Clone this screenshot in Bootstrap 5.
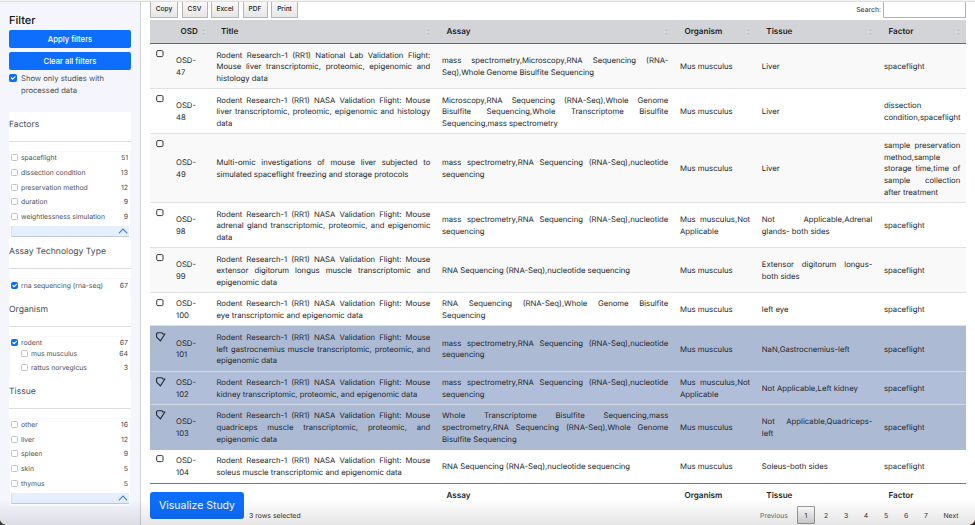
<!DOCTYPE html>
<html lang="en">
<head>
<meta charset="utf-8">
<title>Studies</title>
<link rel="stylesheet" href="https://cdn.jsdelivr.net/npm/bootstrap@5.3.0/dist/css/bootstrap.min.css">
<style>
body{font-family:Inter,"Liberation Sans",sans-serif;font-size:7.73px;line-height:11.8px;color:#24282c;width:975px;height:525px;overflow:hidden;background:#fff;text-rendering:geometricPrecision}
.page-frame{height:525px;border-top:1px solid #f3f3f4;position:relative}
.page-frame::before{content:"";position:absolute;left:0;right:0;top:0;height:1px;background:#dedfe2;z-index:2}
.side{width:141px;background:#f5f6fd;border-right:1px solid #cfd0d8;padding:12px 9px 0 9px;color:#4a4e54}
.side h1{font-size:11px;line-height:14px;font-weight:500;color:#111;margin:0 0 3px}
.side .btn{height:18px;padding:0;font-size:7.7px;line-height:19px;border:0;border-radius:2px;font-weight:500;margin-bottom:4px;background:#0d6efd}
.side .form-check-input{width:7px;height:7px;min-height:0;margin:0;float:none;border-radius:1.5px;border:1px solid #c0c2c8;flex:none}
.side .form-check-input:checked{border-color:#0d6efd;background-size:8px 8px}
.only-processed{font-size:7.65px;line-height:12px;gap:4px;height:38px}
.only-processed span{margin-top:-1px}
.only-processed .form-check-input{width:8px;height:8px}
.facet-head{height:39px;background:#fff;font-size:8.6px;line-height:27px}
.facet-head span{display:block;height:30px;border-bottom:1px solid #dcdddf}
.facet-body{background:#fff;margin:0 1px;padding:0 1px 2px 1px;border-top:1px solid #f8f8fc;font-size:6.8px}
.facet-row{height:14.68px;gap:3.5px;padding-right:1px;padding-bottom:3px;line-height:11px}
.facet-row .form-check-input{margin-left:-.5px}
.facet-row span:last-child{margin-left:auto;font-size:7px}
.collapse-bar{height:11px;background:#e5effd;border-bottom:1px solid #c3cbd6;border-left:1px solid #d5dfee;margin-top:1px;padding-right:1px}
.sub-first,.sub-row{padding-left:10px}
.sub-first{margin-top:-4.3px}
.single-row{padding-bottom:3px}
.main-area{padding:0 9px 0 9px;width:834px}
.tools{height:19px}
.tools .btn{height:16.5px;border:1px solid #b5b5b5;border-radius:1px;border-top:0;padding:0;font-size:6.6px;line-height:17px;background:linear-gradient(#fafafa,#e6e6e6);color:#222;font-weight:500}
.b-copy{width:28px}.b-csv{width:26px}.b-xls{width:28px}.b-pdf{width:25px}.b-prt{width:27px}
.search-box{width:83px;height:17px;border:1px solid #b0b0b0;border-top:0;border-radius:1.5px;padding:0}
.studies{table-layout:fixed;width:816px;border-collapse:separate;border-spacing:0;margin:0}
.studies th{height:24px;background:#d3d4d8;border-bottom:1px solid #66686b;padding:1px 5px 0 10.5px;font-weight:600;font-size:8.1px;color:#1c1e21;vertical-align:middle}
.studies th svg{float:right;margin:2px 0 0}
.studies td{padding:2.4px 5.7px 0 6px;vertical-align:middle;text-align:justify;border-bottom:1px solid #dfe0e2}
.studies td:first-child{vertical-align:top;padding:4.6px 0 0 5px;text-align:left;line-height:0}
.studies tbody tr:nth-child(odd){background:#f9f9f9}
.studies tbody tr.picked{background:#acbad4}
.studies tbody tr.picked:nth-child(even){background:#b0bed9}
.studies tbody tr.picked td{border-color:#cfd6e4}
.studies tbody tr:last-child td{border-bottom:1px solid #77797b}
.studies tbody tr.picked:nth-child(9) td{border-color:#acbad4}
.h45 td{height:45px}.h46 td{height:45.5px}.h69 td{height:69px}.h33 td{height:33px}.h34 td{height:34px}
.studies tfoot td{height:24px;border:0;font-weight:600;font-size:8.1px;color:#1c1e21;padding-top:0;padding-left:10.5px}
.bottom-bar{height:35px;margin-top:-15.5px}
.bottom-bar .btn{width:94px;height:27px;border:0;border-radius:3px;padding:0;font-size:10.5px;line-height:28px;background:#0d6efd}
.rows-note{font-size:6.9px;padding:17.5px 0 0 5px;color:#333}
.pager{margin-top:14px;font-size:6.8px;line-height:19px;color:#333;text-align:center}
.pager span{width:20px}
.pager .now{width:18px;height:18px;margin:0 1px;border:1px solid #999;border-radius:1px;background:linear-gradient(#fff,#dcdcdc);line-height:17px}
.foot-shade{position:absolute;left:0;right:0;bottom:0;height:26px;background:linear-gradient(rgba(0,0,0,0),rgba(0,0,0,.1));pointer-events:none}
.corner{position:absolute;bottom:0;width:6px;height:5px}
</style>
<script src="https://cdn.jsdelivr.net/npm/bootstrap@5.3.0/dist/js/bootstrap.bundle.min.js"></script>
</head>
<body>
<svg width="0" height="0" class="d-none">
<symbol id="box" viewBox="0 0 12 12"><rect x="1.7" y="1.6" width="6.3" height="6" rx="1.2" fill="#fff" fill-opacity=".3" stroke="#34383d"/></symbol>
<symbol id="tick" viewBox="0 0 12 12"><path d="M1.6 6.3V3Q1.6 1.8 2.8 1.8H6.6Q7.8 1.8 7.8 2.8L9.8 3.2 5.4 9.9 1.6 6.2" fill="none" stroke="#23272e" stroke-width="1.1"/></symbol>
<symbol id="sort" viewBox="0 0 5 8"><path d="M2.5 0 4.9 3.5H.1ZM2.5 8 4.9 4.5H.1Z" fill="#bfc2cb" stroke="#e2e4e8" stroke-width=".5"/></symbol>
<symbol id="up" viewBox="0 0 10 8"><path d="M.8 6.4 5 2.1 9.2 6.4" fill="none" stroke="#3c7fe8" stroke-width="1.1"/></symbol>
</svg>
<div class="page-frame d-flex">
<aside class="side flex-shrink-0">
<h1>Filter</h1>
<button class="btn btn-primary d-block w-100">Apply filters</button>
<button class="btn btn-primary d-block w-100">Clear all filters</button>
<label class="only-processed d-flex align-items-start"><input class="form-check-input" type="checkbox" checked><span>Show only studies with<br>processed data</span></label>
<div class="facet-head"><span>Factors</span></div>
<div class="facet-body">
<div class="facet-row d-flex align-items-center"><input class="form-check-input" type="checkbox"><span>spaceflight</span><span>51</span></div>
<div class="facet-row d-flex align-items-center"><input class="form-check-input" type="checkbox"><span>dissection condition</span><span>13</span></div>
<div class="facet-row d-flex align-items-center"><input class="form-check-input" type="checkbox"><span>preservation method</span><span>12</span></div>
<div class="facet-row d-flex align-items-center"><input class="form-check-input" type="checkbox"><span>duration</span><span>9</span></div>
<div class="facet-row d-flex align-items-center"><input class="form-check-input" type="checkbox"><span>weightlessness simulation</span><span>9</span></div>
<div class="collapse-bar d-flex justify-content-end align-items-center"><svg width="10" height="8"><use href="#up"/></svg></div>
</div>
<div class="facet-head"><span>Assay Technology Type</span></div>
<div class="facet-body single-row">
<div class="facet-row d-flex align-items-center"><input class="form-check-input" type="checkbox" checked><span>rna sequencing (rna-seq)</span><span>67</span></div>
</div>
<div class="facet-head"><span>Organism</span></div>
<div class="facet-body">
<div class="facet-row d-flex align-items-center"><input class="form-check-input" type="checkbox" checked><span>rodent</span><span>67</span></div>
<div class="facet-row sub-first d-flex align-items-center"><input class="form-check-input" type="checkbox"><span>mus musculus</span><span>64</span></div>
<div class="facet-row sub-row d-flex align-items-center"><input class="form-check-input" type="checkbox"><span>rattus norvegicus</span><span>3</span></div>
</div>
<div class="facet-head"><span>Tissue</span></div>
<div class="facet-body">
<div class="facet-row d-flex align-items-center"><input class="form-check-input" type="checkbox"><span>other</span><span>16</span></div>
<div class="facet-row d-flex align-items-center"><input class="form-check-input" type="checkbox"><span>liver</span><span>12</span></div>
<div class="facet-row d-flex align-items-center"><input class="form-check-input" type="checkbox"><span>spleen</span><span>9</span></div>
<div class="facet-row d-flex align-items-center"><input class="form-check-input" type="checkbox"><span>skin</span><span>5</span></div>
<div class="facet-row d-flex align-items-center"><input class="form-check-input" type="checkbox"><span>thymus</span><span>5</span></div>
<div class="collapse-bar d-flex justify-content-end align-items-center"><svg width="10" height="8"><use href="#up"/></svg></div>
</div>
</aside>
<main class="main-area">
<div class="tools d-flex justify-content-between">
<div class="d-flex" style="column-gap:3.5px"><button class="btn b-copy">Copy</button><button class="btn b-csv">CSV</button><button class="btn b-xls">Excel</button><button class="btn b-pdf">PDF</button><button class="btn b-prt">Print</button></div>
<label class="d-flex" style="column-gap:2px"><span style="line-height:18px;font-size:6.9px">Search:</span><input class="search-box" type="search"></label>
</div>
<table class="studies">
<colgroup><col style="width:20px"><col style="width:40.5px"><col style="width:225.5px"><col style="width:238px"><col style="width:81.8px"><col style="width:122.2px"><col style="width:88px"></colgroup>
<thead><tr><th></th><th>OSD<svg width="5" height="8"><use href="#sort"/></svg></th><th>Title<svg width="5" height="8"><use href="#sort"/></svg></th><th>Assay<svg width="5" height="8"><use href="#sort"/></svg></th><th>Organism<svg width="5" height="8"><use href="#sort"/></svg></th><th>Tissue<svg width="5" height="8"><use href="#sort"/></svg></th><th>Factor<svg width="5" height="8"><use href="#sort"/></svg></th></tr></thead>
<tbody>
<tr class="h45"><td><svg width="12" height="12"><use href="#box"/></svg></td><td>OSD-<br>47</td><td>Rodent Research-1 (RR1) National Lab Validation Flight: Mouse liver transcriptomic, proteomic, epigenomic and histology data</td><td>mass spectrometry,Microscopy,RNA Sequencing (RNA-Seq),Whole Genome Bisulfite Sequencing</td><td>Mus musculus</td><td>Liver</td><td>spaceflight</td></tr>
<tr class="h45"><td><svg width="12" height="12"><use href="#box"/></svg></td><td>OSD-<br>48</td><td>Rodent Research-1 (RR1) NASA Validation Flight: Mouse liver transcriptomic, proteomic, epigenomic and histology data</td><td>Microscopy,RNA Sequencing (RNA-Seq),Whole Genome Bisulfite Sequencing,Whole Transcriptome Bisulfite Sequencing,mass spectrometry</td><td>Mus musculus</td><td>Liver</td><td>dissection<br>condition,spaceflight</td></tr>
<tr class="h69"><td><svg width="12" height="12"><use href="#box"/></svg></td><td>OSD-<br>49</td><td>Multi-omic investigations of mouse liver subjected to simulated spaceflight freezing and storage protocols</td><td>mass spectrometry,RNA Sequencing (RNA-Seq),nucleotide sequencing</td><td>Mus musculus</td><td>Liver</td><td>sample preservation method,sample storage time,time of sample collection after treatment</td></tr>
<tr class="h45"><td><svg width="12" height="12"><use href="#box"/></svg></td><td>OSD-<br>98</td><td>Rodent Research-1 (RR1) NASA Validation Flight: Mouse adrenal gland transcriptomic, proteomic, and epigenomic data</td><td>mass spectrometry,RNA Sequencing (RNA-Seq),nucleotide sequencing</td><td>Mus musculus,Not Applicable</td><td>Not Applicable,Adrenal glands- both sides</td><td>spaceflight</td></tr>
<tr class="h45"><td><svg width="12" height="12"><use href="#box"/></svg></td><td>OSD-<br>99</td><td>Rodent Research-1 (RR1) NASA Validation Flight: Mouse extensor digitorum longus muscle transcriptomic and epigenomic data</td><td>RNA Sequencing (RNA-Seq),nucleotide sequencing</td><td>Mus musculus</td><td>Extensor digitorum longus-both sides</td><td>spaceflight</td></tr>
<tr class="h33"><td><svg width="12" height="12"><use href="#box"/></svg></td><td>OSD-<br>100</td><td>Rodent Research-1 (RR1) NASA Validation Flight: Mouse eye transcriptomic and epigenomic data</td><td>RNA Sequencing (RNA-Seq),Whole Genome Bisulfite Sequencing</td><td>Mus musculus</td><td>left eye</td><td>spaceflight</td></tr>
<tr class="h46 picked"><td><svg width="12" height="12"><use href="#tick"/></svg></td><td>OSD-<br>101</td><td>Rodent Research-1 (RR1) NASA Validation Flight: Mouse left gastrocnemius muscle transcriptomic, proteomic, and epigenomic data</td><td>mass spectrometry,RNA Sequencing (RNA-Seq),nucleotide sequencing</td><td>Mus musculus</td><td>NaN,Gastrocnemius-left</td><td>spaceflight</td></tr>
<tr class="h33 picked"><td><svg width="12" height="12"><use href="#tick"/></svg></td><td>OSD-<br>102</td><td>Rodent Research-1 (RR1) NASA Validation Flight: Mouse kidney transcriptomic, proteomic, and epigenomic data</td><td>mass spectrometry,RNA Sequencing (RNA-Seq),nucleotide sequencing</td><td>Mus musculus,Not Applicable</td><td>Not Applicable,Left kidney</td><td>spaceflight</td></tr>
<tr class="h45 picked"><td><svg width="12" height="12"><use href="#tick"/></svg></td><td>OSD-<br>103</td><td>Rodent Research-1 (RR1) NASA Validation Flight: Mouse quadriceps muscle transcriptomic, proteomic, and epigenomic data</td><td>Whole Transcriptome Bisulfite Sequencing,mass spectrometry,RNA Sequencing (RNA-Seq),Whole Genome Bisulfite Sequencing</td><td>Mus musculus</td><td>Not Applicable,Quadriceps-left</td><td>spaceflight</td></tr>
<tr class="h34 bg-white"><td><svg width="12" height="12"><use href="#box"/></svg></td><td>OSD-<br>104</td><td>Rodent Research-1 (RR1) NASA Validation Flight: Mouse soleus muscle transcriptomic and epigenomic data</td><td>RNA Sequencing (RNA-Seq),nucleotide sequencing</td><td>Mus musculus</td><td>Soleus-both sides</td><td>spaceflight</td></tr>
</tbody>
<tfoot><tr><td></td><td></td><td></td><td>Assay</td><td>Organism</td><td>Tissue</td><td>Factor</td></tr></tfoot>
</table>
<div class="bottom-bar d-flex">
<button class="btn btn-primary">Visualize Study</button>
<span class="rows-note">3 rows selected</span>
<div class="pager d-flex ms-auto"><span style="width:44px;color:#666">Previous</span><span class="now">1</span><span>2</span><span>3</span><span>4</span><span>5</span><span>6</span><span>7</span><span style="width:30px">Next</span></div>
</div>
</main>
<div class="foot-shade"></div>
<svg class="corner start-0" viewBox="0 0 6 5"><path d="M0 0Q1 4 6 5H0Z" fill="#333"/></svg>
<svg class="corner end-0" viewBox="0 0 6 5"><path d="M6 0Q5 4 0 5H6Z" fill="#3a1a1d"/></svg>
</div>
</body>
</html>
